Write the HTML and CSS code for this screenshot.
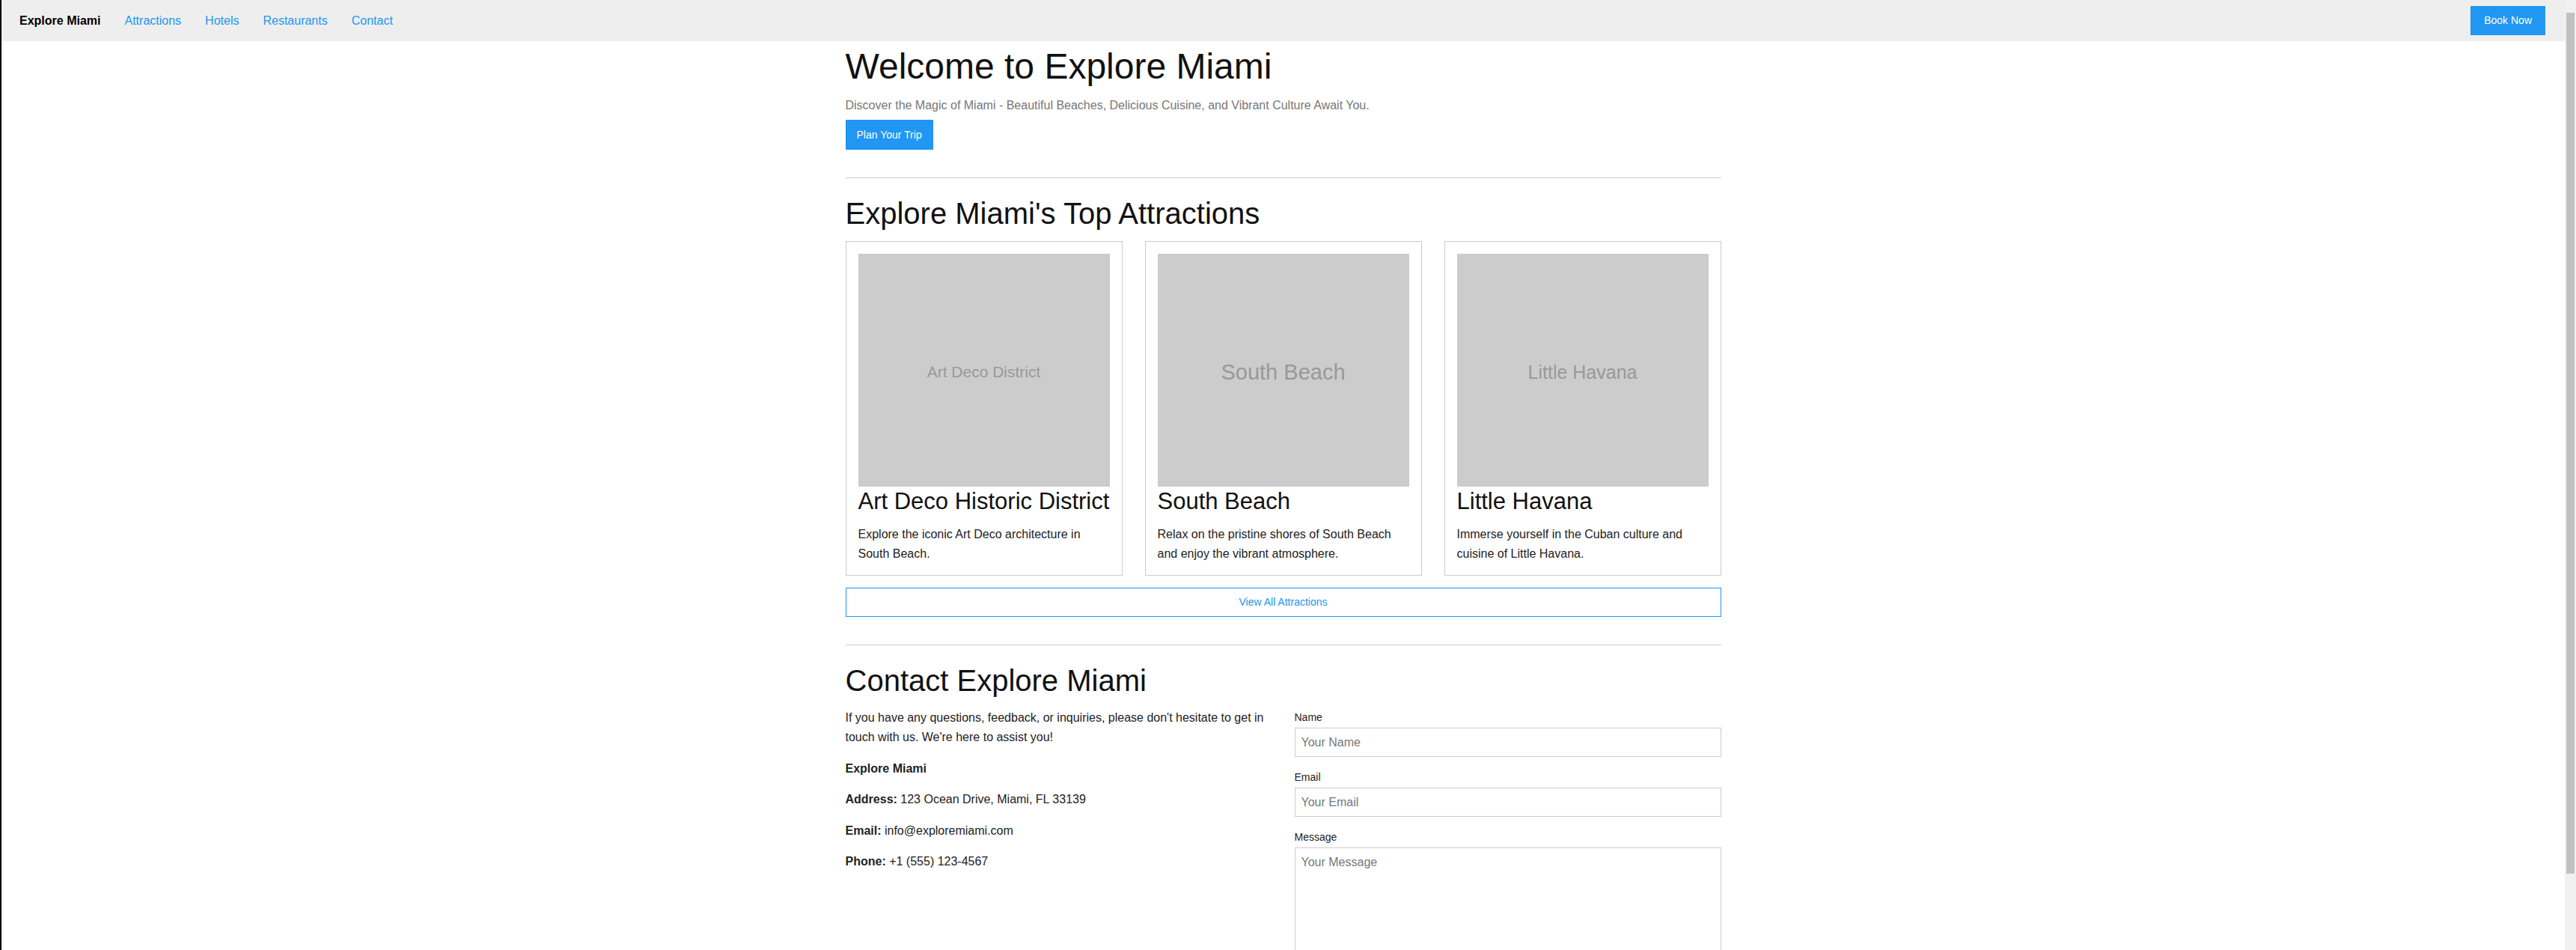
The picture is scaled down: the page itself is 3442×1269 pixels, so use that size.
FILE: index.html
```html
<!DOCTYPE html>
<html lang="en">
<head>
<meta charset="utf-8">
<title>Explore Miami</title>
<link rel="stylesheet" href="styles.css">
</head>
<body>
<nav class="topbar">
  <div class="nav-links">
    <a class="brand" href="#">Explore Miami</a>
    <a href="#attractions">Attractions</a>
    <a href="#">Hotels</a>
    <a href="#">Restaurants</a>
    <a href="#contact">Contact</a>
  </div>
  <a class="nav-cta" href="#">Book Now</a>
</nav>

<main class="container">
  <section class="hero">
    <h1>Welcome to Explore Miami</h1>
    <p class="lead">Discover the Magic of Miami - Beautiful Beaches, Delicious Cuisine, and Vibrant Culture Await You.</p>
    <div class="hero-actions">
      <a class="btn" href="#">Plan Your Trip</a>
    </div>
  </section>

  <hr class="divider">

  <section class="section" id="attractions">
    <h2>Explore Miami's Top Attractions</h2>
    <div class="card-grid">
      <article class="card">
        <div class="card-img"><span class="ph-sm">Art Deco District</span></div>
        <h3>Art Deco Historic District</h3>
        <p>Explore the iconic Art Deco architecture in South Beach.</p>
      </article>
      <article class="card">
        <div class="card-img"><span class="ph-lg">South Beach</span></div>
        <h3>South Beach</h3>
        <p>Relax on the pristine shores of South Beach and enjoy the vibrant atmosphere.</p>
      </article>
      <article class="card">
        <div class="card-img"><span class="ph-md">Little Havana</span></div>
        <h3>Little Havana</h3>
        <p>Immerse yourself in the Cuban culture and cuisine of Little Havana.</p>
      </article>
    </div>
    <a class="btn-outline" href="#">View All Attractions</a>
  </section>

  <hr class="divider">

  <section class="section" id="contact">
    <h2>Contact Explore Miami</h2>
    <div class="contact-grid">
      <div class="contact-info">
        <p>If you have any questions, feedback, or inquiries, please don't hesitate to get in touch with us. We're here to assist you!</p>
        <p><strong>Explore Miami</strong></p>
        <p><strong>Address:</strong> 123 Ocean Drive, Miami, FL 33139</p>
        <p><strong>Email:</strong> info@exploremiami.com</p>
        <p><strong>Phone:</strong> +1 (555) 123-4567</p>
      </div>
      <form class="contact-form">
        <div class="form-group">
          <label for="name">Name</label>
          <input class="form-control" id="name" type="text" placeholder="Your Name">
        </div>
        <div class="form-group">
          <label for="email">Email</label>
          <input class="form-control" id="email" type="email" placeholder="Your Email">
        </div>
        <div class="form-group">
          <label for="message">Message</label>
          <textarea class="form-control" id="message" placeholder="Your Message"></textarea>
        </div>
        <button class="btn btn-submit" type="submit">Send Message</button>
      </form>
    </div>
  </section>
</main>
</body>
</html>
```

FILE: styles.css
```css
html {
  border-left: 2px solid #000;
  padding-right: 15px;
  background:
    linear-gradient(#c1c1c1, #c1c1c1) right 2px top 17px / 11px 1150px no-repeat,
    #f1f1f1;
}

body {
  margin: 0;
  font-family: "Liberation Sans", Arial, Helvetica, sans-serif;
  font-size: 16px;
  line-height: 1.6;
  color: #222;
  background: #fff;
}

/* Top navigation */
.topbar {
  display: flex;
  align-items: center;
  justify-content: space-between;
  height: 55px;
  padding: 0 26px 0 24px;
  background: #eee;
}

.nav-links {
  display: flex;
  align-items: center;
  gap: 32px;
}

.nav-links a {
  color: #2196f3;
  text-decoration: none;
  font-size: 16px;
  line-height: 20px;
}

.nav-links .brand {
  color: #000;
  font-weight: bold;
}

.nav-cta {
  background: #2196f3;
  color: #fff;
  font-size: 14px;
  line-height: 17px;
  padding: 11px 18px;
  text-decoration: none;
}

/* Layout */
.container {
  max-width: 1170px;
  margin: 0 auto;
}

h1 {
  font-size: 48px;
  font-weight: normal;
  line-height: 1.2;
  margin: 5px 0 10px;
  color: #111;
}

h2 {
  font-size: 40px;
  font-weight: normal;
  line-height: 1.2;
  margin: 0 0 13px;
  color: #111;
}

.hero {
  padding-bottom: 37px;
}

.lead {
  color: #777;
  margin: 0 0 7px;
}

.hero-actions {
  display: flex;
}

.btn {
  display: inline-block;
  background: #2196f3;
  color: #fff;
  font-family: inherit;
  font-size: 14px;
  line-height: 16px;
  padding: 12px 15px;
  border: 0;
  text-decoration: none;
  cursor: pointer;
}

.divider {
  border: 0;
  border-top: 1px solid #ccc;
  margin: 0;
}

.section {
  padding: 23px 0 37px;
}

/* Attraction cards */
.card-grid {
  display: grid;
  grid-template-columns: repeat(3, 1fr);
  gap: 30px;
}

.card {
  border: 1px solid #ccc;
  padding: 16px;
}

.card-img {
  height: 311px;
  background: #ccc;
  color: #999;
  display: flex;
  align-items: center;
  justify-content: center;
}

.card-img span {
  line-height: 1.15;
  padding-top: 0.22em;
}

.ph-sm { font-size: 21px; }
.ph-md { font-size: 25px; }
.ph-lg { font-size: 29px; }

.card h3 {
  font-size: 31px;
  font-weight: normal;
  line-height: 40px;
  margin: 0 0 11px;
  white-space: nowrap;
  color: #111;
}

.card p {
  margin: 0;
}

.btn-outline {
  display: block;
  margin-top: 16px;
  border: 1px solid #2196f3;
  color: #2196f3;
  text-align: center;
  font-size: 14px;
  line-height: 15px;
  padding: 11px 0;
  text-decoration: none;
}

/* Contact */
.contact-grid {
  display: grid;
  grid-template-columns: 1fr 1fr;
  gap: 30px;
}

.contact-info p {
  margin: 0 0 16px;
}

.form-group {
  margin-bottom: 15px;
}

.form-group label {
  display: block;
  font-size: 14px;
  line-height: 24px;
  margin-bottom: 2px;
}

.form-control {
  display: block;
  width: 100%;
  box-sizing: border-box;
  border: 1px solid #ccc;
  border-radius: 0;
  padding: 8px;
  font-family: "Liberation Sans", Arial, Helvetica, sans-serif;
  font-size: 16px;
  line-height: 21px;
  color: #222;
  background: #fff;
}

.form-control::placeholder {
  color: #777;
}

textarea.form-control {
  height: 150px;
  resize: vertical;
}

.btn-submit {
  margin-top: 4px;
}
```
